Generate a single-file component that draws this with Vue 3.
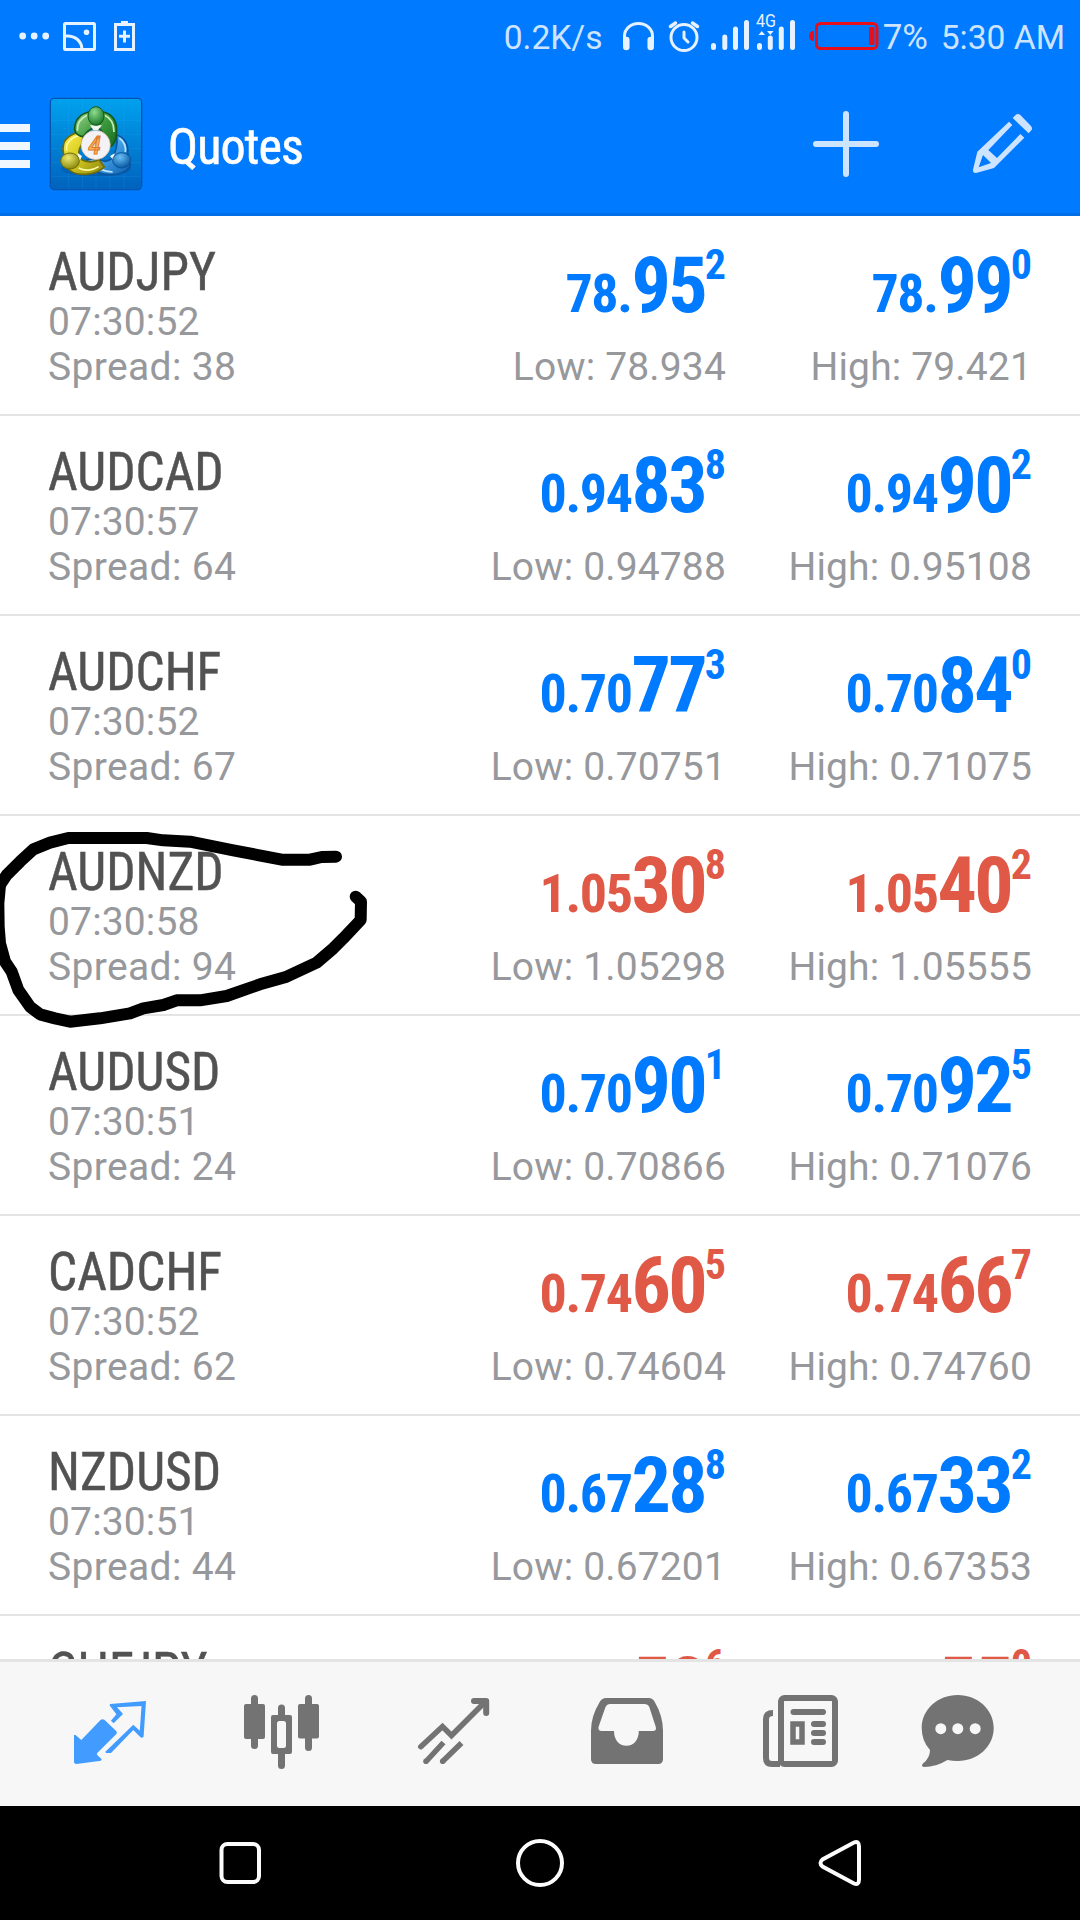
<template>
  <div class="page">
    <div class="status-bar">
      <svg class="status-left" width="130" height="72" viewBox="14 0 130 72">
        <g fill="#e6f2ff">
          <circle cx="22.7" cy="36" r="3.4" />
          <circle cx="34.2" cy="36" r="3.4" />
          <circle cx="45.7" cy="36" r="3.4" />
          <circle cx="86.5" cy="32.3" r="2.8" />
          <path d="M121 21h7v4h-7z" />
        </g>
        <g fill="none" stroke="#e6f2ff" stroke-width="3">
          <rect x="64.5" y="23.5" width="30" height="26" rx="1" />
          <path d="M65 36c10 -1 17 5 17 14" />
          <rect x="115.5" y="24.5" width="18" height="25" />
          <path d="M119 36.3h11M124.5 30.5v12" />
        </g>
      </svg>
      <div class="status-right">
        <span class="speed">0.2K/s</span>
        <svg width="264" height="72" viewBox="616 0 264 72">
          <g fill="none" stroke="#e6f2ff" stroke-width="3" stroke-linecap="round">
            <path d="M624.5 42v-6a14 12.5 0 0 1 28 0v6" />
            <path d="M626.3 40v7M650.7 40v7" stroke-width="6.5" />
            <circle cx="684" cy="37.5" r="13" />
            <path d="M684 32v6l4 4" />
            <path d="M670.5 26.5l5 -3.5M697.5 26.5l-5 -3.5" stroke-width="3.5" />
            <path d="M713.5 45.5v2M724.8 37v10.5M735.5 29v18.5M746.5 22.5v25M759.5 45.5v2M770.3 38v9.5M781.3 29v18.5M792.5 22.5v25" stroke-width="5" />
          </g>
          <path d="M758.5 35l3.3 -4 3.3 4zM767 31l3.3 4 3.3 -4z" fill="#e6f2ff" />
          <text x="756" y="27" class="network" textLength="20" lengthAdjust="spacingAndGlyphs">4G</text>
          <rect x="816.5" y="23.5" width="60.5" height="25" rx="4" fill="none" stroke="#e60f1a" stroke-width="3" />
          <rect x="869" y="27" width="5.5" height="18" rx="1" fill="#e60f1a" />
          <path d="M814 31v10c-3 0 -5 -2 -5 -5s2 -5 5 -5z" fill="#e60f1a" />
        </svg>
        <span class="percent">7%</span>
        <span class="clock">5:30 AM</span>
      </div>
    </div>

    <div class="header">
      <div class="menu"><i></i><i></i><i></i></div>
      <svg class="logo" width="94" height="94" viewBox="147 291 282 282">
        <defs>
          <linearGradient id="sky" x1="0" y1="0" x2="0" y2="1">
            <stop offset="0" stop-color="#00a1ee" />
            <stop offset="1" stop-color="#0062bd" />
          </linearGradient>
          <linearGradient id="green" x1="0" y1="0" x2="1" y2="1">
            <stop offset="0" stop-color="#9bd48e" />
            <stop offset=".5" stop-color="#3d9a3d" />
            <stop offset="1" stop-color="#17671d" />
          </linearGradient>
          <linearGradient id="yellow" x1="0" y1="0" x2="1" y2="1">
            <stop offset="0" stop-color="#fff04a" />
            <stop offset=".5" stop-color="#d2c81f" />
            <stop offset="1" stop-color="#8a8510" />
          </linearGradient>
          <linearGradient id="blue" x1="0" y1="0" x2="1" y2="1">
            <stop offset="0" stop-color="#8fd4ff" />
            <stop offset=".5" stop-color="#3f9fe6" />
            <stop offset="1" stop-color="#0b5cae" />
          </linearGradient>
          <radialGradient id="greenHead" cx=".4" cy=".3" r=".7">
            <stop offset="0" stop-color="#8fdc8f" />
            <stop offset="1" stop-color="#1a7a2a" />
          </radialGradient>
          <radialGradient id="yellowHead" cx=".4" cy=".3" r=".7">
            <stop offset="0" stop-color="#eeea70" />
            <stop offset="1" stop-color="#8b8a0c" />
          </radialGradient>
          <radialGradient id="blueHead" cx=".4" cy=".3" r=".7">
            <stop offset="0" stop-color="#6cc0f5" />
            <stop offset="1" stop-color="#075aa6" />
          </radialGradient>
        </defs>
        <rect x="151" y="295" width="274" height="274" rx="12" fill="url(#sky)" stroke="#0555ae" stroke-width="4" />
        <path d="M153 361h270M153 404h270M153 446h270M153 488h270M153 530h270M206 297v270M248 297v270M288 297v270M330 297v270M372 297v270" stroke="#4cc0ff" stroke-opacity=".18" stroke-width="2" />
        <ellipse cx="288" cy="505" rx="105" ry="24" fill="#003f86" opacity=".3" />
        <!-- blue figure -->
        <path d="M350 404c24 8 36 32 33 56l8 36c-8 20 -36 30 -66 28c-32 -2 -56 -22 -64 -44l32 -6c14 12 30 12 42 2c14 -20 18 -48 15 -72z" fill="url(#blue)" stroke="#0b559f" stroke-width="5" />
        <path d="M274 482c12 20 36 34 64 34M358 414c14 10 20 26 18 42" fill="none" stroke="#b9e3ff" stroke-width="5" />
        <!-- yellow figure -->
        <path d="M252 395c-28 0 -55 16 -61 36c-4 14 -2 24 0 32l8 36c10 16 32 26 60 24c24 -2 42 -10 54 -22l-16 -22c-18 8 -40 8 -56 -2c-8 -12 -6 -28 4 -44z" fill="url(#yellow)" stroke="#6f6c0a" stroke-width="5" />
        <path d="M200 452c-4 -22 14 -42 40 -46M236 504c18 10 42 8 60 -4" fill="none" stroke="#fff9a0" stroke-width="5" />
        <!-- green figure -->
        <path d="M250 410c-10 0 -26 -8 -26 -24c0 -26 18 -46 44 -50h40c26 4 42 24 42 54c0 26 -8 46 -22 52l-20 -24c4 -14 0 -28 -14 -34h-14c-14 4 -22 14 -30 26z" fill="url(#green)" stroke="#155a1b" stroke-width="5" />
        <path d="M232 392c0 -20 10 -38 30 -46M314 346c18 8 28 24 28 50" fill="none" stroke="#c6ecbc" stroke-width="5" />
        <path d="M270 376h36l-12 14h-14zM232 458l14 10l-8 18zM330 468l14 -8l-2 24z" fill="#f4f8f4" />
        <ellipse cx="288" cy="348" rx="24" ry="28" fill="url(#greenHead)" stroke="#155a1b" stroke-width="3" />
        <ellipse cx="210" cy="483" rx="28" ry="24" fill="url(#yellowHead)" stroke="#6f6c0a" stroke-width="3" />
        <ellipse cx="365" cy="481" rx="27" ry="23" fill="url(#blueHead)" stroke="#0a559c" stroke-width="3" />
        <circle cx="287" cy="435" r="44" fill="#f3f3f6" stroke="#c9a98e" stroke-width="2" />
        <text x="284" y="462" class="logo-number">4</text>
      </svg>
      <h1 class="title"><span class="condensed">Quotes</span></h1>
      <svg class="actions" width="300" height="140" viewBox="0 0 900 420">
        <path d="M108 192H288M198 102V282" stroke="#cce4ff" stroke-width="18" stroke-linecap="round" />
        <g fill="#cce4ff">
          <path d="M698 114l8 -8q7 -7 15 -1l32 33q6 8 1 13l-8 9z" />
          <path fill-rule="evenodd" d="M687 125l10 10l-72 75l26 24l70 -72l12 11l-91 91l-54 15q-10 1 -9 -10l13 -54zM609 225l-13 37l37 -13z" />
        </g>
      </svg>
    </div>

    <div class="list">
      <div v-for="q in quotes" :key="q.symbol" class="row" :class="q.direction">
        <div class="info">
          <div class="symbol"><span class="condensed">{{ q.symbol }}</span></div>
          <template v-if="q.time">
            <div class="detail time">{{ q.time }}</div>
            <div class="detail spread">Spread: {{ q.spread }}</div>
          </template>
        </div>
        <div v-for="side in q.sides" :key="side.label" class="side">
          <div class="price">
            <span class="small">{{ side.price[0] }}</span><span class="big">{{ side.price[1] }}</span><span class="sup">{{ side.price[2] }}</span>
          </div>
          <div v-if="side.value" class="detail">{{ side.label }}: {{ side.value }}</div>
        </div>
      </div>
    </div>

    <div class="toolbar">
      <svg class="active" width="100" height="144" viewBox="60 0 100 144">
        <path d="M74 73h1.5l5.8 5l19.2 -20q2.1 -1.5 4.2 0l11.7 11.3q1 1.3 0 2.7l-19.4 19.3q-.5 1.5 1 2.4l3.6 3.3l-.6 1.7l-24.5 3.3q-2.5 0 -2.5 -2z" />
        <path d="M109.5 43.3L110.2 42L146 39L143.6 74.7Q142 76.5 140.5 75.3L133.3 68L111 91H106L105.4 89.7L133.3 62.7L139.8 68.7L141.5 44L117 45.3L123 52L113.6 61.3L110.9 58.7L116.4 52.3Z" />
      </svg>
      <svg width="100" height="144" viewBox="232 0 100 144">
        <rect x="244" y="42" width="21" height="35" rx="2" />
        <rect x="251" y="33" width="7" height="54" rx="3.5" />
        <rect x="298" y="42" width="21" height="34.5" rx="2" />
        <rect x="305" y="33" width="7" height="56" rx="3.5" />
        <path d="M278 53v-7a3.5 3.5 0 0 1 7 0v7h5q2 0 2 2v35q0 2 -2 2h-5v11.5a3.5 3.5 0 0 1 -7 0v-11.5h-5q-2 0 -2 -2v-35q0 -2 2 -2zM279.5 59q-2.5 0 -2.5 2.5v22q0 2.5 2.5 2.5h4q2.5 0 2.5 -2.5v-22q0 -2.5 -2.5 -2.5z" fill-rule="evenodd" />
      </svg>
      <svg width="100" height="144" viewBox="404 0 100 144">
        <g fill="none" stroke="#737373" stroke-width="5.5">
          <path d="M420.8 84.7L442.5 64.5L451.5 73.5L485 40" stroke-linecap="round" />
          <path d="M474 38.9H486.2V51" stroke-linecap="round" stroke-linejoin="round" stroke-width="6" />
          <path d="M426.5 99L443.5 80.5M443 99L461.5 81" />
        </g>
        <circle cx="426" cy="99.3" r="2.8" />
        <circle cx="442.7" cy="99.3" r="2.8" />
      </svg>
      <svg width="100" height="144" viewBox="576 0 100 144">
        <path fill-rule="evenodd" d="M606 36h43q3.5 0 5.5 3.5q8.5 14.5 8.5 29v28.5q0 5 -5 5h-62q-5 0 -5 -5v-28.5q0 -14.5 9 -29q2 -3.5 6 -3.5zM610 42q-3 0 -4.5 3l-7 20q-.5 4 3 4h12.5c0 9 5 14.7 12.4 14.7s12.4 -5.7 12.4 -14.7h14q4 0 3 -4l-6.5 -20q-1.3 -3 -5 -3z" />
      </svg>
      <svg width="100" height="144" viewBox="748 0 100 144">
        <g fill="none" stroke="#737373" stroke-width="6">
          <rect x="781" y="36" width="54" height="66" rx="3.5" />
          <path d="M773 51q-7 0 -7 6v39q0 6 6 6h8" />
          <rect x="793" y="62" width="9" height="18" stroke-width="5.5" />
          <path d="M793.5 50h29.5M814 62h9M814 71h9M814 80h9" stroke-linecap="round" />
        </g>
      </svg>
      <svg width="100" height="144" viewBox="920 0 100 144">
        <path d="M957.7 33c20 0 36 14.5 36 33s-16 33 -36 33q-5.5 0 -10.3 -1q-11 7 -23.4 7q-3.5 -1 -1 -3.5q7 -5.5 7 -13.5q-8.3 -9 -8.3 -22c0 -18.5 16 -33 36 -33z" />
        <g fill="#f7f7f7">
          <circle cx="940.8" cy="66.7" r="5.5" />
          <circle cx="957.8" cy="66.7" r="5.5" />
          <circle cx="975.2" cy="66.7" r="5.5" />
        </g>
      </svg>
    </div>

    <div class="nav">
      <svg width="60" height="60" viewBox="0 0 60 60"><rect x="11.5" y="11" width="37.5" height="38" rx="6" /></svg>
      <svg width="60" height="60" viewBox="0 0 60 60"><circle cx="30" cy="30" r="22" /></svg>
      <svg width="60" height="60" viewBox="0 0 60 60"><path d="M44 9.5q5 -2 5 4v33q0 6 -5 4l-31.5 -17q-4 -3.5 0 -7z" /></svg>
    </div>

    <!-- hand-drawn loop around AUDNZD -->
    <svg class="marker" width="400" height="230" viewBox="0 0 1200 690">
      <path d="M1008 140L965 141L930 149L845 149L700 121L570 95L490 91L440 84L205 84L150 98L100 118L60 155L20 195L0 225L-5 280L-4 350L0 400L15 455L35 485L55 540L90 590L120 613L165 625L210 635L300 625L390 610L430 595L490 585L530 571L600 571L680 558L780 523L860 500L950 458L1000 415L1030 385L1082 330L1083 275L1067 260" />
    </svg>
  </div>
</template>

<script setup>
const quote = (symbol, time, spread, direction, low, lowValue, high, highValue) => ({
  symbol,
  time,
  spread,
  direction,
  sides: [
    { label: 'Low', price: low, value: lowValue },
    { label: 'High', price: high, value: highValue },
  ],
})

const quotes = [
  quote('AUDJPY', '07:30:52', 38, 'up', ['78.', '95', '2'], '78.934', ['78.', '99', '0'], '79.421'),
  quote('AUDCAD', '07:30:57', 64, 'up', ['0.94', '83', '8'], '0.94788', ['0.94', '90', '2'], '0.95108'),
  quote('AUDCHF', '07:30:52', 67, 'up', ['0.70', '77', '3'], '0.70751', ['0.70', '84', '0'], '0.71075'),
  quote('AUDNZD', '07:30:58', 94, 'down', ['1.05', '30', '8'], '1.05298', ['1.05', '40', '2'], '1.05555'),
  quote('AUDUSD', '07:30:51', 24, 'up', ['0.70', '90', '1'], '0.70866', ['0.70', '92', '5'], '0.71076'),
  quote('CADCHF', '07:30:52', 62, 'down', ['0.74', '60', '5'], '0.74604', ['0.74', '66', '7'], '0.74760'),
  quote('NZDUSD', '07:30:51', 44, 'up', ['0.67', '28', '8'], '0.67201', ['0.67', '33', '2'], '0.67353'),
  quote('CHFJPY', '', '', 'down', ['', '52', '6'], '', ['', '55', '0'], ''),
]
</script>

<style>
body {
  margin: 0;
  overflow: hidden;
}
</style>

<style scoped>
.page {
  position: relative;
  width: 1080px;
  height: 1920px;
  display: flex;
  flex-direction: column;
  overflow: hidden;
  background: #fff;
  font-family: Roboto, "Liberation Sans", sans-serif;
}

svg {
  display: block;
  flex: none;
}

.status-bar {
  height: 72px;
  flex: none;
  display: flex;
  justify-content: space-between;
  padding: 0 15px 0 14px;
  background: #007aff;
  color: #cce4ff;
}

.status-right {
  display: flex;
  line-height: 76px;
  font-size: 33.6px;
  white-space: nowrap;
}

.speed {
  width: 112px;
}

.percent {
  width: 58px;
  padding-left: 3px;
  font-size: 35px;
}

.network {
  font-size: 19px;
  fill: #e6f2ff;
}

.header {
  height: 144px;
  flex: none;
  box-sizing: border-box;
  display: flex;
  background: #007aff;
  border-bottom: 3px solid #006fe8;
}

.menu {
  width: 30px;
  padding-top: 52px;
  display: flex;
  flex-direction: column;
  gap: 10px;
}

.menu i {
  height: 8px;
  background: #f0f7ff;
}

.logo {
  margin: 25px 0 0 19px;
}

.logo-number {
  font-family: "Roboto Condensed", Roboto, sans-serif;
  font-stretch: 75%;
  font-size: 78px;
  font-weight: 500;
  font-style: italic;
  text-anchor: middle;
  fill: #f8b860;
  stroke: #e07a2c;
  stroke-width: 3;
}

.title {
  flex: 1;
  margin: 0;
  padding: 45px 0 0 25px;
  font-size: 50px;
  line-height: 60px;
  font-weight: 400;
  letter-spacing: -0.9px;
  color: #fff;
  -webkit-text-stroke: 0.6px #fff;
}

.actions {
  margin-top: 8px;
}

.condensed,
.price {
  font-family: "Roboto Condensed", Roboto, sans-serif;
  font-stretch: 75%;
}

.list {
  height: 1443px;
  flex: none;
  overflow: hidden;
}

.row {
  height: 200px;
  box-sizing: border-box;
  display: flex;
  padding-right: 48px;
  border-bottom: 2px solid #e4e4e4;
}

.info {
  width: 420px;
  padding: 23px 0 0 48px;
  box-sizing: border-box;
}

.symbol {
  height: 61px;
  font-size: 54px;
  line-height: 65px;
  color: #525252;
  -webkit-text-stroke: 0.5px #525252;
}

.symbol .condensed {
  display: inline-block;
  transform: scaleX(0.953);
  transform-origin: left;
}

.detail {
  font-size: 39px;
  line-height: 45px;
  letter-spacing: 0.15px;
  color: #97989c;
  white-space: nowrap;
}

.spread {
  letter-spacing: 0.35px;
}

.side {
  width: 306px;
  padding-top: 12px;
  text-align: right;
}

.price {
  height: 117px;
  line-height: 115px;
  font-weight: bold;
  white-space: nowrap;
}

.up .price {
  color: #007aff;
}

.down .price {
  color: #e05846;
}

.small {
  font-size: 54px;
  letter-spacing: -0.026em;
}

.big {
  font-size: 78px;
  letter-spacing: -0.036em;
}

.sup {
  position: relative;
  top: -33px;
  font-size: 42px;
}

.toolbar {
  height: 147px;
  flex: none;
  box-sizing: border-box;
  display: flex;
  gap: 72px;
  padding-left: 60px;
  background: #f7f7f7;
  border-top: 3px solid #e4e4e4;
  fill: #737373;
}

.active {
  fill: #429cff;
}

.nav {
  flex: 1;
  display: flex;
  justify-content: center;
  align-items: center;
  gap: 240px;
  background: #000;
}

.nav svg {
  fill: none;
  stroke: #fcfcfc;
  stroke-width: 4;
}

.marker {
  position: absolute;
  left: 0;
  top: 810px;
  fill: none;
  stroke: #000;
  stroke-width: 36;
  stroke-linecap: round;
  stroke-linejoin: round;
}
</style>
